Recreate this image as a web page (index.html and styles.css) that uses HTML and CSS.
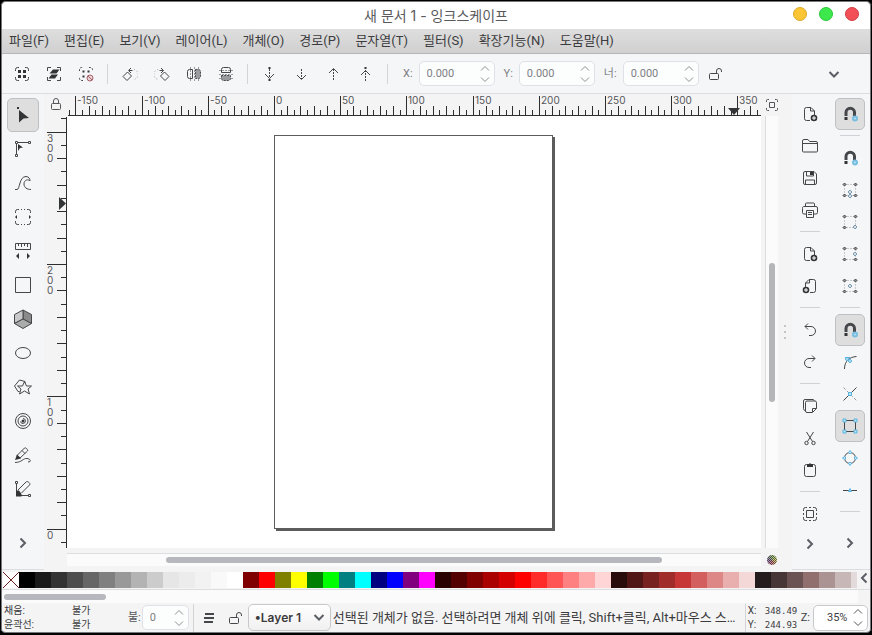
FILE: index.html
```html
<!DOCTYPE html>
<html lang="ko">
<head>
<meta charset="utf-8">
<title>새 문서 1 - 잉크스케이프</title>
<link rel="stylesheet" href="styles.css">
</head>
<body>
<svg class="defs" aria-hidden="true">
  <symbol id="corners" viewBox="0 0 16 16"><path d="M1.500 5V3.500a2 2 0 0 1 2-2H5M11 1.500h1.500a2 2 0 0 1 2 2V5M14.500 11v1.500a2 2 0 0 1-2 2H11M5 14.500H3.500a2 2 0 0 1-2-2V11"/></symbol>
  <symbol id="magnet" viewBox="0 0 16 16"><path class="thick" d="M4 10V6.500a4.200 4.200 0 0 1 8.500 0V10"/><path class="solid" d="M2.500 11h3v3h-3z"/><circle class="blue-soft" cx="13" cy="12.500" r="2"/></symbol>
  <symbol id="bbox" viewBox="0 0 16 16"><path class="soft" stroke-dasharray="1 2" d="M2.500 2.500h11v11h-11z"/><path class="knot" d="M2.500 1L4 2.500 2.500 4 1 2.500zM13.500 1L15 2.500 13.500 4 12 2.500zM2.500 12L4 13.500 2.500 15 1 13.500z"/></symbol>
  <symbol id="page-plus" viewBox="0 0 16 16"><path d="M8 14.500H4.500a2 2 0 0 1-2-2v-9a2 2 0 0 1 2-2H9L12.500 5v4M8.500 1.500V5h4"/><circle class="solid" cx="12" cy="12" r="3.300"/><path class="white" d="M10 12h4M12 10v4"/></symbol>
  <symbol id="lock-open" viewBox="0 0 16 16"><rect x="2.500" y="7.500" width="9" height="6" rx="1"/><path d="M9.500 7V5a2.500 2.500 0 0 1 5 0v1"/></symbol>
  <symbol id="down" viewBox="0 0 16 16"><path class="bold" d="M3.500 6L8 10.500 12.500 6"/></symbol>
  <symbol id="right" viewBox="0 0 16 16"><path class="bold" d="M5.500 3.500L10 8l-4.500 4.500"/></symbol>
  <symbol id="spin-up" viewBox="0 0 10 6"><path d="M1 5.500L5 1.500 9 5.500"/></symbol>
  <symbol id="spin-down" viewBox="0 0 10 6"><path d="M1 .500L5 4.500 9 .500"/></symbol>
  <symbol id="rotate" viewBox="0 0 16 16"><path d="M5.500 6l4 4-4.500 4.500-4-4zM7 4.500h3.500M9 2L6.500 4.500 9 7"/><path class="soft" stroke-dasharray="1 2" d="M12 3.500a5 5 0 0 1 2 9l-3 1.500"/></symbol>
</svg>

<div class="window">
  <header class="titlebar">
    <h1>새 문서 1 - 잉크스케이프</h1>
    <div class="window-buttons">
      <button class="wb yellow" aria-label="최소화"></button>
      <button class="wb green" aria-label="최대화"></button>
      <button class="wb red" aria-label="닫기"></button>
    </div>
  </header>

  <nav class="menubar">
    <button>파일(F)</button><button>편집(E)</button><button>보기(V)</button><button>레이어(L)</button><button>개체(O)</button><button>경로(P)</button><button>문자열(T)</button><button>필터(S)</button><button>확장기능(N)</button><button>도움말(H)</button>
  </nav>

  <div class="tool-controls">
    <button class="tb" aria-label="모두 선택"><svg><use href="#corners"/><path class="solid" d="M4 4h3v3H4zM9 4h3v3H9zM4 9h3v3H4zM9 9h3v3H9z"/></svg></button>
    <button class="tb" aria-label="모든 레이어 선택"><svg><path d="M1.500 5V1.500H5M11 1.500h3.500V5M14.500 11v3.500H11M5 14.500H1.500V11"/><path class="solid" d="M7 3.500h6.500l-3 4H3.500zM5.500 8.500h6.500l-3 4H2.500z"/></svg></button>
    <button class="tb" aria-label="선택 해제"><svg><use href="#corners" stroke-dasharray="2 1"/><path class="solid" d="M4.500 4.500h2v2h-2zM9.500 4.500h2v2h-2zM4.500 9.500h2v2h-2z"/><circle class="rose" cx="12" cy="12" r="3"/><path class="rose" d="M10 10l4 4"/></svg></button>
    <i class="vsep"></i>
    <button class="tb" aria-label="왼쪽으로 회전"><svg><use href="#rotate"/></svg></button>
    <button class="tb" aria-label="오른쪽으로 회전"><svg class="flip"><use href="#rotate"/></svg></button>
    <button class="tb" aria-label="좌우 뒤집기"><svg><path d="M6.500 3.500h-3a2 2 0 0 0-2 2v5a2 2 0 0 0 2 2h3z"/><path class="soft" stroke-dasharray="2 1" d="M8.500 1v14M4.500 1v14M12.500 1v14"/><path class="mid" d="M9.500 3.500h3a2 2 0 0 1 2 2v5a2 2 0 0 1-2 2h-3z"/></svg></button>
    <button class="tb" aria-label="상하 뒤집기"><svg><path d="M3.500 6.500v-3a2 2 0 0 1 2-2h5a2 2 0 0 1 2 2v3z"/><path class="soft" stroke-dasharray="2 1" d="M1 8.500h14M1 4.500h14M1 12.500h14"/><path class="mid" d="M3.500 9.500v3a2 2 0 0 0 2 2h5a2 2 0 0 0 2-2v-3z"/></svg></button>
    <i class="vsep"></i>
    <button class="tb" aria-label="맨 아래로"><svg><path stroke-dasharray="2 1" d="M7.500 3v9"/><path d="M3 8l4.500 4.500L12 8"/><path class="solid" d="M6.500 1h2v2h-2zM6.500 13h2v2h-2z"/></svg></button>
    <button class="tb" aria-label="아래로"><svg><path stroke-dasharray="2 1" d="M7.500 3v10"/><path d="M3 9l4.500 4.500L12 9"/></svg></button>
    <button class="tb" aria-label="위로"><svg><path stroke-dasharray="2 1" d="M7.500 3v11"/><path d="M3 7l4.500-4.500L12 7"/></svg></button>
    <button class="tb" aria-label="맨 위로"><svg><path stroke-dasharray="2 1" d="M7.500 4v11"/><path d="M3 9l4.500-4.500L12 9"/><path class="solid" d="M6.500 1h2v2h-2z"/></svg></button>
    <i class="vsep"></i>
    <div class="field"><label for="x">X:</label><span class="spin"><input id="x" value="0.000"><span class="steps"><button aria-label="X 증가"><svg><use href="#spin-up"/></svg></button><button aria-label="X 감소"><svg><use href="#spin-down"/></svg></button></span></span></div>
    <div class="field"><label for="y">Y:</label><span class="spin"><input id="y" value="0.000"><span class="steps"><button aria-label="Y 증가"><svg><use href="#spin-up"/></svg></button><button aria-label="Y 감소"><svg><use href="#spin-down"/></svg></button></span></span></div>
    <div class="field"><label for="w">너:</label><span class="spin"><input id="w" value="0.000"><span class="steps"><button aria-label="너비 증가"><svg><use href="#spin-up"/></svg></button><button aria-label="너비 감소"><svg><use href="#spin-down"/></svg></button></span></span></div>
    <button class="tb" aria-label="비율 잠금"><svg><use href="#lock-open"/></svg></button>
    <button class="tb more" aria-label="더 보기"><svg><use href="#down"/></svg></button>
  </div>

  <main class="workspace">
    <div class="toolbox">
      <button class="active" aria-label="선택 도구"><svg><path class="solid" d="M4 3l10 8-5.500.500L4 15.500z"/><path class="solid" d="M2 0h2v2H2z"/></svg></button>
      <button aria-label="노드 도구"><svg><path d="M1.500 3v10M3 1.500h11"/><path class="hollow" d="M.500.500h2v2h-2zM13.500.500h2v2h-2zM.500 13.500h2v2h-2z"/><path class="solid" d="M3 3l5 3.500-3 .500-2 3z"/></svg></button>
      <button aria-label="모양 빌더"><svg><path d="M0 14.500h2c3 0 2-13 9-13 3 0 4 2.500 4 4.500-1.500-2-6-1.500-6 3 0 3.500 3 5.500 7 5.500"/></svg></button>
      <button aria-label="확대 도구"><svg><path d="M.500 4V2.500a2 2 0 0 1 2-2H4M6 .500h1M9 .500h1M12 .500h1.500a2 2 0 0 1 2 2V4M15.500 12v1.500a2 2 0 0 1-2 2H12M10 15.500H9M7 15.500H6M4 15.500H2.500a2 2 0 0 1-2-2V12"/><path class="solid" d="M2 6L0 8l2 2zM14 6l2 2-2 2z"/></svg></button>
      <button aria-label="측정 도구"><svg><path d="M.500.500h15v6H.500zM3.500 1v2M6.500 1v3M9.500 1v2M12.500 1v3"/><path class="solid" d="M4 10v6l-3-3zM12 10v6l3-3z"/></svg></button>
      <button aria-label="사각형"><svg><path d="M.500.500h15v15H.500z"/></svg></button>
      <button aria-label="3D 상자"><svg class="cube"><path class="c1" d="M10 1l8.500 4.500v9L10 10z"/><path class="c2" d="M10 1v9l-8.500 4.500v-9z"/><path class="c3" d="M10 10l8.500 4.500L10 19.500l-8.500-5z"/></svg></button>
      <button aria-label="원"><svg><ellipse cx="8" cy="8" rx="7.500" ry="5.500"/></svg></button>
      <button aria-label="별"><svg class="wide"><path d="M5.500 13.500H4L.500 8l5-6L11 3.500V5"/><path d="M10.500 3.500l2 4.500h5l-3.500 3 1.500 5-5-3-5 3L7 11 3.500 8h5z"/></svg></button>
      <button aria-label="나선"><svg><circle cx="8" cy="8" r="7.500"/><circle cx="8" cy="8" r="5"/><path d="M8 5.500a2.500 2.500 0 1 1-2.500 3"/><circle class="solid" cx="8" cy="8" r="1.500"/></svg></button>
      <button aria-label="연필"><svg><path d="M2 8.500L9.500 1c1-1 4 2 3 3L5 11zM7 3.500l3 3"/><path class="solid" d="M2 7.500L6 11.500 0 13z"/><path d="M0 15.500c7 0 8-4.500 12-4 3 .500 4 2 3 3l-2 .500"/></svg></button>
      <button aria-label="펜"><svg><path d="M1.500 3v10M4 14.500h9M3 9l8-8c1.500-1.500 5 1.500 3.500 3l-8 8"/><path class="hollow" d="M.500.500h2v2h-2zM13.500 13.500h2v2h-2z"/><path class="solid" d="M1 9.500h3L6.500 13v2.500H1z"/></svg></button>
      <button class="more" aria-label="도구 더 보기"><svg><use href="#right"/></svg></button>
    </div>

    <div class="canvas-grid">
      <button class="corner" aria-label="안내선 잠금"><svg><rect x="3.500" y="6.500" width="9" height="6" rx="1"/><path d="M5.500 6V4a2.500 2.500 0 0 1 5 0v2"/></svg></button>
      <svg class="ruler-h" id="ruler-h"></svg>
      <button class="corner fit" aria-label="창에 맞춤"><svg><path d="M5.500 5.500h5v5h-5zM2.500 5V3.500a1 1 0 0 1 1-1H5M11 2.500h1.500a1 1 0 0 1 1 1V5M13.500 11v1.500a1 1 0 0 1-1 1H11M5 13.500H3.500a1 1 0 0 1-1-1V11"/></svg></button>
      <svg class="ruler-v" id="ruler-v"></svg>
      <div class="canvas"><div class="page"></div></div>
      <div class="scroll-v"><i></i><b></b><i></i></div>
      <div class="scroll-h"><i></i><b></b><i></i></div>
      <button class="cms" aria-label="색상 관리"></button>
    </div>
    <div class="grip"><i></i><i></i><i></i></div>

    <div class="sidebar commands">
      <button aria-label="새 문서"><svg><use href="#page-plus"/></svg></button>
      <button aria-label="열기"><svg><path d="M.500 13V3a1.500 1.500 0 0 1 1.500-1.500h4l1.500 2H14A1.500 1.500 0 0 1 15.500 5v8a1 1 0 0 1-1 1h-13a1 1 0 0 1-1-1zM.500 5.500h15"/></svg></button>
      <button aria-label="저장"><svg><path d="M1.500 3a1.500 1.500 0 0 1 1.500-1.500h9L14.500 4v9a1.500 1.500 0 0 1-1.500 1.500H3A1.500 1.500 0 0 1 1.500 13zM3.500 14v-4h9v4M4.500 2v4h7V2"/><path class="solid" d="M8 2h3v3H8z"/></svg></button>
      <button aria-label="인쇄"><svg><path d="M3.500 4V2a1 1 0 0 1 1-1h7a1 1 0 0 1 1 1v2M4 12H2a1.500 1.500 0 0 1-1.500-1.500v-4A1.500 1.500 0 0 1 2 4.500h12A1.500 1.500 0 0 1 15.500 6v4.500A1.500 1.500 0 0 1 14 12h-2M4.500 8.500h7v7h-7zM6 10.500h4M6 12.500h4"/></svg></button>
      <hr>
      <button aria-label="가져오기"><svg><use href="#page-plus"/></svg></button>
      <button aria-label="내보내기"><svg class="flip"><use href="#page-plus"/></svg></button>
      <hr>
      <button aria-label="실행 취소"><svg><path d="M3 4.500h6a4.500 4.500 0 0 1 0 9H7M6 1.500l-3 3 3 3"/></svg></button>
      <button aria-label="다시 실행"><svg class="flip"><path d="M3 4.500h6a4.500 4.500 0 0 1 0 9H7M6 1.500l-3 3 3 3"/></svg></button>
      <hr>
      <button aria-label="복사"><svg><path d="M3.500 4.500A1.500 1.500 0 0 1 5 3h8a1.500 1.500 0 0 1 1.500 1.500v6l-4 4H5A1.500 1.500 0 0 1 3.500 13zM10.500 14v-3.500h4M3 12.500a2 2 0 0 1-1.500-2V3A1.500 1.500 0 0 1 3 1.500h8l1.500 1"/></svg></button>
      <button aria-label="잘라내기"><svg><path d="M4.500 2l6 9.500M11.500 2l-6 9.500"/><circle cx="4.500" cy="13" r="1.700"/><circle cx="11.500" cy="13" r="1.700"/></svg></button>
      <button aria-label="붙여넣기"><svg><rect x="2.500" y="2.500" width="11" height="12" rx="2"/><path class="solid" d="M5 2h2l1-1 1 1h2v3H5z"/></svg></button>
      <hr>
      <button aria-label="선택 영역 확대"><svg><use href="#corners"/><path d="M4.500 4.500h7v7h-7z"/><path d="M7 1.500h2M7 14.500h2M1.500 7v2M14.500 7v2"/></svg></button>
      <button class="more" aria-label="명령 더 보기"><svg><use href="#right"/></svg></button>
    </div>

    <div class="sidebar snaps">
      <button class="active" aria-label="스냅"><svg><use href="#magnet"/></svg></button>
      <hr>
      <button aria-label="경계 상자 스냅"><svg><use href="#magnet"/></svg></button>
      <button aria-label="모서리 변 스냅"><svg><use href="#bbox"/><path class="knot" d="M13.500 12l1.500 1.500-1.500 1.500-1.500-1.500z"/><path class="steel" d="M8 8l2 2-2 2-2-2zM8 12l2 2-2 2-2-2z"/></svg></button>
      <button aria-label="모서리 스냅"><svg><use href="#bbox"/><path class="steel" d="M13 11l2 2-2 2-2-2z"/></svg></button>
      <button aria-label="변 중점 스냅"><svg><use href="#bbox"/><path class="knot" d="M13.500 12l1.500 1.500-1.500 1.500-1.500-1.500z"/><path class="steel" d="M13 6l2 2-2 2-2-2z"/></svg></button>
      <button aria-label="중심 스냅"><svg><use href="#bbox"/><path class="knot" d="M13.500 12l1.500 1.500-1.500 1.500-1.500-1.500z"/><path class="steel" d="M8 6l2 2-2 2-2-2z"/></svg></button>
      <hr>
      <button class="active" aria-label="노드 스냅"><svg><use href="#magnet"/></svg></button>
      <button aria-label="경로 스냅"><svg><path d="M2.500 15c0-8 5-12 12-12.500"/><circle class="blue" cx="5" cy="5" r="1.500"/><circle class="blue" cx="8" cy="7" r="1.500"/><path class="blue" d="M3 3.500h5"/></svg></button>
      <button aria-label="교차점 스냅"><svg><path d="M1.500 14.500l13-13"/><path class="soft" stroke-dasharray="3 2" d="M1.500 1.500l13 13"/><path class="blue" d="M6.500 6.500h3v3h-3z"/></svg></button>
      <button class="active" aria-label="꼭짓점 스냅"><svg><path d="M2.500 2.500h11v11h-11z"/><path class="blue" d="M1 1h3v3H1zM12 1h3v3h-3zM1 12h3v3H1zM12 12h3v3h-3z"/></svg></button>
      <button aria-label="부드러운 노드 스냅"><svg><circle cx="8" cy="8" r="5.500"/><path class="blue" d="M8 .500l1.500 2L8 4 6.500 2.500zM8 12l1.500 1.500-1.500 2-1.500-2zM2.500 6.500L4 8 2.500 9.500.500 8zM13.500 6.500l2 1.500-2 1.500L12 8z"/></svg></button>
      <button aria-label="선 중점 스냅"><svg><path d="M1 8.500h14"/><path class="blue" d="M8 6.500L9.500 9.500h-3z"/></svg></button>
      <hr>
      <button class="more" aria-label="스냅 더 보기"><svg><use href="#right"/></svg></button>
    </div>
  </main>

  <div class="palette">
    <div class="swatches" id="swatches"><button class="none" aria-label="없음"><svg><path d="M0 0l16 16M16 0L0 16"/></svg></button></div>
    <button class="palette-menu" aria-label="팔레트 메뉴"><svg class="flip"><use href="#right"/></svg></button>
  </div>
  <div class="palette-scroll"><b></b></div>

  <footer class="statusbar">
    <dl class="style"><dt>채움:</dt><dd>불가</dd><dt>윤곽선:</dt><dd>불가</dd></dl>
    <div class="field opacity"><label for="o">불:</label><span class="spin"><input id="o" value="0"><span class="steps"><button aria-label="불투명도 증가"><svg><use href="#spin-up"/></svg></button><button aria-label="불투명도 감소"><svg><use href="#spin-down"/></svg></button></span></span></div>
    <i class="vsep"></i>
    <button class="sb" aria-label="레이어"><svg><path class="thick" d="M4 4h9M3 8h10M3 12h9"/></svg></button>
    <button class="sb" aria-label="레이어 잠금"><svg><use href="#lock-open"/></svg></button>
    <span class="layer"><select aria-label="현재 레이어"><option>•Layer 1</option></select><svg><use href="#down"/></svg></span>
    <p class="message">선택된 개체가 없음. 선택하려면 개체 위에 클릭, Shift+클릭, Alt+마우스 스⋯</p>
    <i class="vsep"></i>
    <dl class="coords"><dt>X:</dt><dd>348.49</dd><dt>Y:</dt><dd>244.93</dd></dl>
    <div class="field zoom"><label for="z">Z:</label><span class="spin"><input id="z" value="35%"><span class="steps"><button aria-label="확대"><svg><use href="#spin-up"/></svg></button><button aria-label="축소"><svg><use href="#spin-down"/></svg></button></span></span></div>
  </footer>
</div>
<script src="app.js"></script>
</body>
</html>
```
FILE: styles.css
```css
* { box-sizing: border-box; }
body {
  margin: 0;
  background: #000;
  font: 13px/16px Roboto, "Noto Sans CJK KR", sans-serif;
  color: #3c3c3e;
}
button, input, select { font: inherit; color: inherit; margin: 0; padding: 0; border: 0; background: none; }
button { display: flex; align-items: center; justify-content: center; }
svg { width: 16px; height: 16px; flex: none; fill: none; stroke: #46474a; stroke-width: 1; display: block; }
.defs { position: absolute; width: 0; height: 0; }
.solid { fill: #333436; stroke: none; }
.hollow { fill: #fff; }
.white { stroke: #fff; }
.thick { stroke-width: 2; }
#magnet .thick { stroke-width: 3; }
.bold { stroke-width: 2; stroke: #5c5e66; }
.soft { stroke: #9a9b9f; }
.knot { fill: #8c8d90; }
.mid { fill: #9a9b9f; stroke-dasharray: 2 1; }
.rose { stroke: #a8606a; fill: #e8d4d6; }
.steel { stroke: #7d9bad; fill: #d2e1ea; }
.blue { stroke: #58b4e0; fill: #bfe4f6; }
.blue-soft { stroke: #76bfe2; stroke-width: 2; fill: #bfe0f0; }
.flip { transform: scaleX(-1); }

.window {
  height: 100vh;
  display: flex;
  flex-direction: column;
  border: 1px solid #000;
  border-bottom-width: 2px;
  border-radius: 6px;
  background: #f4f4f4;
  overflow: hidden;
  box-shadow: inset 0 0 0 1px #77777c;
  padding: 1px;
}
.titlebar { position: relative; height: 27px; flex: none; display: flex; align-items: center; justify-content: center; background: #fff; border-radius: 5px 5px 0 0; }
.titlebar h1 { margin: 0; font-family: Inter, "Noto Sans CJK KR", sans-serif; font-size: 14px; font-weight: 400; color: #5a5a5c; }
.window-buttons { position: absolute; right: 11px; top: 5px; display: flex; gap: 12px; }
.wb { width: 14px; height: 14px; border-radius: 50%; border: 1px solid; }
.yellow { background: #fbc536; border-color: #dda827; }
.green { background: #3ce84c; border-color: #2cc63b; }
.red { background: #f25056; border-color: #d23e46; }

.menubar { height: 25px; flex: none; display: flex; gap: 15px; padding-left: 7px; background: linear-gradient(#dedede, #d0d0d0); border-bottom: 1px solid #b6b6b6; }

.tool-controls { height: 40px; flex: none; display: flex; align-items: center; padding: 0 20px 0 4px; background: #f5f6f8; border-bottom: 1px solid #dcdde0; }
.tb { width: 32px; height: 32px; flex: none; }
.vsep { width: 1px; height: 20px; margin: 0 6px 0 5px; background: #d3d4d8; }
.more { margin-left: auto; }
.field { display: flex; align-items: center; gap: 6px; color: #7e7f83; font-size: 11px; }
.tool-controls .field { margin-left: 9px; }
.spin { display: flex; height: 25px; width: 76px; border: 1px solid #dfe1e8; border-radius: 5px; background: #fcfdfd; }
.spin input { flex: 1; min-width: 0; padding-left: 7px; outline: 0; }
.steps { display: flex; flex-direction: column; justify-content: space-between; width: 18px; padding: 1px 0; }
.steps svg { width: 10px; height: 6px; stroke: #8d8e92; }
.steps button { height: 9px; }

.workspace { flex: 1; min-height: 0; display: flex; }
.toolbox { width: 42px; padding: 4px 5px 12px; display: flex; flex-direction: column; background: #f5f6f8; border-bottom: 1px solid #dcdde0; }
.toolbox button { height: 34px; flex: none; border: 1px solid transparent; border-radius: 5px; }
.toolbox button.more, .sidebar button.more { margin: auto 0 0; height: 28px; }
.toolbox .active, .sidebar .active { background: #dededf; border-color: #bfc0c2; }
.toolbox .wide { width: 18px; height: 18px; }
.toolbox .cube { width: 20px; height: 20px; }
.c1 { fill: #8a8a8a; } .c2 { fill: #c8c8c8; } .c3 { fill: #ababab; }

.canvas-grid { flex: 1; min-width: 0; display: grid; grid-template: 22px minmax(0, 1fr) 18px 4px / 23px minmax(0, 1fr) 17px; }
.corner svg { stroke: #55565a; }
.fit { padding-left: 5px; }
.ruler-h, .ruler-v { width: 100%; height: 100%; stroke: #2e2e30; overflow: hidden; }
.ruler-h text, .ruler-v text { fill: #55565a; stroke: none; font-family: Inter, sans-serif; font-size: 10px; }
.marker { fill: #333436; stroke: none; }
.canvas { position: relative; background: #fff; overflow: hidden; }
.page { position: absolute; left: 207px; top: 19px; width: 279px; height: 394px; border: 1px solid #5c5c5c; box-shadow: 2px 2px 0 #5c5c5c; background: #fff; }
.scroll-v { margin-left: 4px; padding: 0 3px; border-left: 1px solid #dcdde0; background: #fbfbfb; display: flex; flex-direction: column; }
.scroll-v i:first-child { flex: 147; } .scroll-v b { flex: 139; border-radius: 3px; background: #b5b6b8; } .scroll-v i:last-child { flex: 146; }
.scroll-h { grid-column: 2; margin-top: 5px; padding: 3px 0; border-top: 1px solid #dcdde0; background: #fbfbfb; display: flex; }
.scroll-h i:first-child { flex: 99; } .scroll-h b { flex: 496; border-radius: 3px; background: #b7b8bd; } .scroll-h i:last-child { flex: 99; }
.cms { width: 10px; height: 10px; margin: 7px 0 0 6px; border-radius: 50%; background: repeating-conic-gradient(#2228 0 25%, #fff6 0 50%) 0 0 / 2px 2px, conic-gradient(#6a9a4a, #b8b040, #b34a5a, #6a4a8a, #6a9a4a); }
.grip { width: 14px; display: flex; flex-direction: column; justify-content: center; align-items: center; gap: 4px; }
.grip i { width: 2px; height: 2px; background: #c4c5c8; }

.sidebar { padding: 4px 0 12px; display: flex; flex-direction: column; background: #f5f6f8; border-bottom: 1px solid #dcdde0; }
.sidebar button { height: 32px; flex: none; border: 1px solid transparent; border-radius: 5px; }
.sidebar hr { width: 20px; height: 1px; border: 0; margin: 5px auto 6px; flex: none; background: #d0d1d5; }
.commands { width: 40px; padding-right: 4px; }
.snaps { width: 38px; padding-right: 5px; padding-left: 3px; }

.palette { height: 18px; flex: none; display: flex; margin-top: 2px; padding-left: 1px; border-bottom: 1px solid #dcdde0; }
.swatches { flex: 1; min-width: 0; display: flex; overflow: hidden; height: 16px; }
.swatches button { width: 16px; height: 16px; flex: none; }
.none { background: #fff; }
.none svg { stroke: #6b1f22; }
.palette-menu { width: 13px; height: 12px; overflow: hidden; }
.palette-scroll { height: 13px; flex: none; margin-right: 12px; padding: 4px 2px 3px; background: #fbfbfb; display: flex; }
.palette-scroll b { width: 12%; border-radius: 3px; background: #b7b8bd; }

.statusbar { height: 29px; flex: none; display: flex; align-items: center; padding: 0 2px; }
dl { margin: 0; display: grid; font-size: 10px; line-height: 14px; }
dd { margin: 0; }
.style { grid-template-columns: 68px 56px; }
.opacity { gap: 1px; }
.opacity .spin { width: 47px; }
.opacity label { color: #55565a; }
.statusbar .vsep { height: 28px; margin: 0 2px 0 4px; }
.sb { width: 26px; height: 26px; flex: none; }
.layer { position: relative; flex: none; }
.layer select { appearance: none; width: 83px; height: 27px; padding-left: 6px; border: 1px solid #c8c9cb; border-radius: 5px; background: linear-gradient(#fff, #f0f0f0); font-family: Inter, sans-serif; font-size: 12px; font-weight: 600; }
.layer svg { position: absolute; right: 4px; top: 5px; pointer-events: none; }
.message { flex: 1; min-width: 0; margin: 0 2px; white-space: nowrap; overflow: hidden; text-overflow: ellipsis; }
.coords { grid-template-columns: 17px 36px; }
.coords dd { font-family: "DejaVu Sans Mono", monospace; font-size: 9px; }
.zoom { gap: 3px; color: #3c3c3e; }
.zoom .spin { width: 55px; height: 26px; border-color: #c8c9cb; background: #fff; }
.zoom input { padding-left: 13px; }
.zoom .steps svg { stroke: #55565a; }
```
FILE: app.js
```js
const NS = "http://www.w3.org/2000/svg";
const PX_PER_UNIT = 1.3235;

function add(parent, tag, attrs, text) {
  const el = document.createElementNS(NS, tag);
  for (const key in attrs) el.setAttribute(key, attrs[key]);
  if (text !== undefined) el.textContent = text;
  parent.appendChild(el);
}

function drawHorizontal() {
  const svg = document.getElementById("ruler-h");
  const { width } = svg.getBoundingClientRect();
  svg.replaceChildren();
  for (let unit = -155; ; unit += 5) {
    const x = Math.floor(207.5 + unit * PX_PER_UNIT) + 0.5;
    if (x > width) break;
    const top = unit % 50 === 0 ? 2 : unit % 10 === 0 ? 12 : 16;
    add(svg, "path", { d: `M${x} ${top}V21` });
    if (unit % 50 === 0) add(svg, "text", { x: x + 1.5, y: 10 }, unit);
  }
  add(svg, "path", { d: `M1 21.5H${width}` });
  add(svg, "path", { class: "marker", d: "M661 14h12l-6 7z" });
}

function drawVertical() {
  const svg = document.getElementById("ruler-v");
  const { height } = svg.getBoundingClientRect();
  svg.replaceChildren();
  for (let unit = 310; ; unit -= 10) {
    const y = Math.floor(413.2 - unit * PX_PER_UNIT) + 0.5;
    if (y > height) break;
    const left = unit % 100 === 0 ? 3 : unit % 20 === 0 ? 13 : 17;
    add(svg, "path", { d: `M${left} ${y}H22` });
    if (unit % 100 === 0) {
      [...String(unit)].forEach((digit, i) => add(svg, "text", { x: 3, y: y + 9 + i * 10 }, digit));
    }
  }
  add(svg, "path", { d: `M22.5 1V${height}` });
  add(svg, "path", { class: "marker", d: "M15 81v13l7-6.500z" });
}

const COLORS = `000000 1a1a1a 333333 4d4d4d 666666 808080 999999 b3b3b3 cccccc e6e6e6 ececec f2f2f2 f9f9f9 ffffff
800000 ff0000 808000 ffff00 008000 00ff00 008080 00ffff 000080 0000ff 800080 ff00ff
2b0000 550000 800000 aa0000 d40000 ff0000 ff2a2a ff5555 ff8080 ffaaaa ffd5d5
280b0b 501616 782121 a02c2c c83737 d35f5f de8787 e9afaf f4d7d7
241c1c 483737 6c5353 916f6f ac9393 c8b7b7 e3dbdb`.split(/\s+/);

const swatches = document.getElementById("swatches");
for (const color of COLORS) {
  const button = document.createElement("button");
  button.style.background = "#" + color;
  button.setAttribute("aria-label", "#" + color);
  swatches.appendChild(button);
}

function draw() {
  drawHorizontal();
  drawVertical();
}
draw();
window.addEventListener("resize", draw);
```
